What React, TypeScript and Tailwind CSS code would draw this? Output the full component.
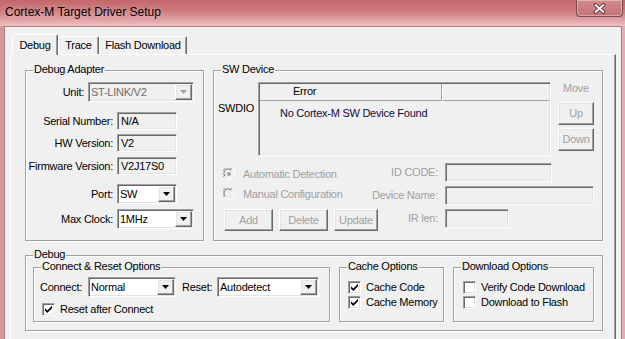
import type { ReactNode } from "react";

// classic Win32 3D edges
const SUNKEN =
  "border border-t-[#a0a0a0] border-l-[#a0a0a0] border-b-white border-r-white shadow-[inset_1px_1px_0_#696969,inset_-1px_-1px_0_#e3e3e3]";
const RAISED =
  "border border-t-white border-l-white border-b-[#696969] border-r-[#696969] shadow-[inset_-1px_-1px_0_#a0a0a0,inset_1px_1px_0_#e3e3e3]";

function GroupBox({
  title,
  className = "",
  children,
}: {
  title: string;
  className?: string;
  children?: ReactNode;
}) {
  return (
    <div
      className={`relative shrink-0 border border-[#a0a0a0] shadow-[inset_1px_1px_0_#fff,1px_1px_0_#fff] ${className}`}
    >
      <span className="absolute left-[7px] -top-[8px] bg-[#f0f0f0] px-[1px] leading-[13px] whitespace-nowrap">
        {title}
      </span>
      {children}
    </div>
  );
}

function Combo({
  value,
  className = "",
  disabled = false,
}: {
  value: string;
  className?: string;
  disabled?: boolean;
}) {
  return (
    <div
      className={`flex h-[20px] shrink-0 ${SUNKEN} ${
        disabled ? "bg-[#f0f0f0] text-[#6d6d6d]" : "bg-white"
      } ${className}`}
    >
      <span className="flex-1 pl-[2px] leading-[18px] whitespace-nowrap overflow-hidden">
        {value}
      </span>
      <span
        className={`w-[17px] h-[16px] mt-[1px] mr-[1px] flex items-center justify-center bg-[#f0f0f0] ${RAISED}`}
      >
        <svg width="7" height="4" viewBox="0 0 7 4">
          <path d="M0 0h7L3.5 4z" fill={disabled ? "#a0a0a0" : "#000"} />
        </svg>
      </span>
    </div>
  );
}

function TextBox({
  value = "",
  className = "",
}: {
  value?: string;
  className?: string;
}) {
  return (
    <div
      className={`shrink-0 bg-[#f0f0f0] pl-[3px] flex items-center whitespace-nowrap ${SUNKEN} ${className}`}
    >
      {value}
    </div>
  );
}

function Check({ checked }: { checked: boolean }) {
  return (
    <span
      className={`w-[13px] h-[13px] shrink-0 bg-white flex items-center justify-center ${SUNKEN}`}
    >
      {checked && (
        <svg width="7" height="7" viewBox="0 0 7 7">
          <path d="M0 2.2L2.3 4.5L7 -0.2V2.3L2.3 7L0 4.7Z" fill="#000" />
        </svg>
      )}
    </span>
  );
}

function Radio({ checked }: { checked: boolean }) {
  return (
    <svg width="12" height="12" viewBox="0 0 12 12" className="shrink-0">
      <circle cx="6" cy="6" r="5.5" fill="#f0f0f0" stroke="#fff" />
      <path d="M1.1 9.2A5.5 5.5 0 0 1 9.2 1.1" fill="none" stroke="#a0a0a0" />
      <path d="M2.2 8.3A4.3 4.3 0 0 1 8.3 2.2" fill="none" stroke="#696969" />
      {checked && <circle cx="6" cy="6" r="2" fill="#a0a0a0" />}
    </svg>
  );
}

function Btn({ children, className = "" }: { children: ReactNode; className?: string }) {
  return (
    <div
      className={`shrink-0 flex items-center justify-center bg-[#f0f0f0] text-[#a0a0a0] ${RAISED} ${className}`}
    >
      {children}
    </div>
  );
}

function Tab({ label, active, className = "" }: { label: string; active?: boolean; className?: string }) {
  return (
    <div
      className={`flex items-center justify-center rounded-t-[2px] border-t border-l border-white border-r border-r-[#696969] shadow-[inset_-1px_0_0_#a0a0a0] bg-[#f0f0f0] ${
        active ? "relative z-10 h-[21px] -mb-[1px]" : "h-[18px]"
      } ${className}`}
    >
      {label}
    </div>
  );
}

function DebugAdapter() {
  return (
    <GroupBox title="Debug Adapter" className="w-[179px] h-[171px]">
      <div className="flex flex-col">
        <div className="flex items-center mt-[11px] h-[20px]">
          <span className="w-[62px] text-right pr-[4px]">Unit:</span>
          <Combo value="ST-LINK/V2" disabled className="w-[106px]" />
        </div>
        <div className="flex items-center mt-[10px] h-[18px]">
          <span className="w-[91px] text-right pr-[4px]">Serial Number:</span>
          <TextBox value="N/A" className="w-[60px] h-[18px]" />
        </div>
        <div className="flex items-center mt-[4px] h-[18px]">
          <span className="w-[91px] text-right pr-[4px]">HW Version:</span>
          <TextBox value="V2" className="w-[60px] h-[18px]" />
        </div>
        <div className="flex items-center mt-[5px] h-[18px]">
          <span className="w-[91px] text-right pr-[4px] whitespace-nowrap">Firmware Version:</span>
          <TextBox value="V2J17S0" className="w-[60px] h-[18px]" />
        </div>
        <div className="flex items-center mt-[9px] h-[20px]">
          <span className="w-[91px] text-right pr-[4px]">Port:</span>
          <Combo value="SW" className="w-[60px]" />
        </div>
        <div className="flex items-center mt-[5px] h-[20px]">
          <span className="w-[91px] text-right pr-[4px]">Max Clock:</span>
          <Combo value="1MHz" className="w-[77px]" />
        </div>
      </div>
    </GroupBox>
  );
}

function SwDevice() {
  return (
    <GroupBox title="SW Device" className="w-[390px] h-[171px]">
      <div className="flex mt-[11px]">
        <div className="w-[44px] pl-[4px] pt-[20px]">SWDIO</div>
        <div className={`w-[293px] h-[74px] bg-[#f0f0f0] flex flex-col ${SUNKEN}`}>
          <div className="flex h-[17px] mt-[1px] ml-[1px]">
            <div className="w-[182px] pl-[33px] border-r border-b border-[#a0a0a0] shadow-[1px_0_0_#fff] leading-[15px]">
              Error
            </div>
            <div className="flex-1 ml-[1px] mr-[1px] border-b border-[#a0a0a0]" />
          </div>
          <div className="pl-[21px] mt-[6px] text-[#0c0c3c] whitespace-nowrap">
            No Cortex-M SW Device Found
          </div>
        </div>
        <div className="w-[51px] flex flex-col pl-[7px]">
          <div className="w-[36px] text-center text-[#a0a0a0]">Move</div>
          <Btn className="w-[36px] h-[23px] mt-[7px]">Up</Btn>
          <Btn className="w-[36px] h-[23px] mt-[3px]">Down</Btn>
        </div>
      </div>

      <div className="flex mt-[7px]">
        <div className="w-[149px] flex flex-col text-[#a0a0a0]">
          <div className="flex items-center h-[16px] mt-[3px] pl-[9px] whitespace-nowrap">
            <Radio checked />
            <span className="ml-[8px]">Automatic Detection</span>
          </div>
          <div className="flex items-center h-[16px] mt-[4px] pl-[9px] whitespace-nowrap">
            <Radio checked={false} />
            <span className="ml-[8px]">Manual Configuration</span>
          </div>
          <div className="flex mt-[7px] pl-[10px] gap-[6px]">
            <Btn className="w-[49px] h-[22px]">Add</Btn>
            <Btn className="w-[49px] h-[22px]">Delete</Btn>
            <Btn className="w-[44px] h-[22px]">Update</Btn>
          </div>
        </div>
        <div className="flex flex-col gap-[4px] text-[#a0a0a0]">
          <div className="flex items-center">
            <span className="w-[82px] text-right pr-[7px] whitespace-nowrap">ID CODE:</span>
            <TextBox className="w-[107px] h-[19px]" />
          </div>
          <div className="flex items-center">
            <span className="w-[82px] text-right pr-[7px] whitespace-nowrap">Device Name:</span>
            <TextBox className="w-[149px] h-[19px]" />
          </div>
          <div className="flex items-center">
            <span className="w-[82px] text-right pr-[7px] whitespace-nowrap">IR len:</span>
            <TextBox className="w-[64px] h-[19px]" />
          </div>
        </div>
      </div>
    </GroupBox>
  );
}

function DebugOptions() {
  return (
    <GroupBox title="Debug" className="w-[578px] h-[76px] mt-[14px]">
      <div className="flex gap-[9px] mt-[11px] pl-[7px]">
        <GroupBox title="Connect & Reset Options" className="w-[297px] h-[55px]">
          <div className="flex items-center mt-[9px] pl-[6px] h-[20px]">
            <span className="w-[48px]">Connect:</span>
            <Combo value="Normal" className="w-[88px]" />
            <span className="w-[35px] ml-[6px]">Reset:</span>
            <Combo value="Autodetect" className="w-[102px]" />
          </div>
          <div className="flex items-center mt-[6px] pl-[8px] gap-[5px]">
            <Check checked />
            <span className="whitespace-nowrap">Reset after Connect</span>
          </div>
        </GroupBox>
        <GroupBox title="Cache Options" className="w-[105px] h-[55px]">
          <div className="flex flex-col gap-[2px] mt-[13px] pl-[8px]">
            <div className="flex items-center gap-[5px]">
              <Check checked />
              <span className="whitespace-nowrap">Cache Code</span>
            </div>
            <div className="flex items-center gap-[5px]">
              <Check checked />
              <span className="whitespace-nowrap">Cache Memory</span>
            </div>
          </div>
        </GroupBox>
        <GroupBox title="Download Options" className="w-[141px] h-[55px]">
          <div className="flex flex-col gap-[2px] mt-[13px] pl-[9px]">
            <div className="flex items-center gap-[5px]">
              <Check checked={false} />
              <span className="whitespace-nowrap">Verify Code Download</span>
            </div>
            <div className="flex items-center gap-[5px]">
              <Check checked={false} />
              <span className="whitespace-nowrap">Download to Flash</span>
            </div>
          </div>
        </GroupBox>
      </div>
    </GroupBox>
  );
}

export default function App() {
  return (
    <div className="w-[625px] h-[339px] overflow-hidden flex flex-col bg-[#dc9ea1] font-['Liberation_Sans',Arial,sans-serif] text-[11px] leading-[13px] tracking-[-0.25px] text-black">
      {/* title bar */}
      <div className="h-[26px] shrink-0 flex items-start bg-[linear-gradient(180deg,#c4676b_0%,#cc777b_40%,#e0a0a3_75%,#f1c1c3_100%)]">
        <span className="ml-[5px] mt-[5px] text-[12px] leading-[14px] tracking-normal whitespace-nowrap [text-shadow:0_0_6px_rgba(255,255,255,0.6)]">
          Cortex-M Target Driver Setup
        </span>
        <div className="ml-auto mr-[2px] w-[47px] h-[17px] flex items-center justify-center rounded-b-[4px] border border-t-0 border-[#7a4a4c] bg-[linear-gradient(180deg,#d18a8d,#c27275)] shadow-[inset_0_0_0_1px_rgba(255,255,255,0.35)]">
          <svg width="13" height="11" viewBox="0 0 13 11">
            <path d="M2.5 2L10.5 9M10.5 2L2.5 9" stroke="#4d2a2c" strokeWidth="3.6" strokeLinecap="round" />
            <path d="M2.5 2L10.5 9M10.5 2L2.5 9" stroke="#fff" strokeWidth="1.8" strokeLinecap="round" />
          </svg>
        </div>
      </div>

      <div className="flex flex-1 min-h-0">
        <div className="w-[4px] shrink-0 bg-[#d9979a]" />
        <div className="w-[618px] shrink-0 flex flex-col bg-[#f0f0f0] border-l border-t border-r border-[#9c8486] pl-[5px]">
          {/* tab strip */}
          <div className="h-[27px] shrink-0 flex items-end pl-[2px]">
            <Tab label="Debug" active className="w-[46px]" />
            <Tab label="Trace" className="w-[41px]" />
            <Tab label="Flash Download" className="w-[88px]" />
          </div>
          {/* tab page */}
          <div className="w-[606px] h-[290px] shrink-0 border-t border-l border-white border-r border-r-[#696969] shadow-[inset_-1px_0_0_#a0a0a0] pl-[14px] pt-[15px]">
            <div className="flex gap-[9px]">
              <DebugAdapter />
              <SwDevice />
            </div>
            <DebugOptions />
          </div>
        </div>
        <div className="flex-1 bg-[#e6adb0]" />
      </div>
    </div>
  );
}
